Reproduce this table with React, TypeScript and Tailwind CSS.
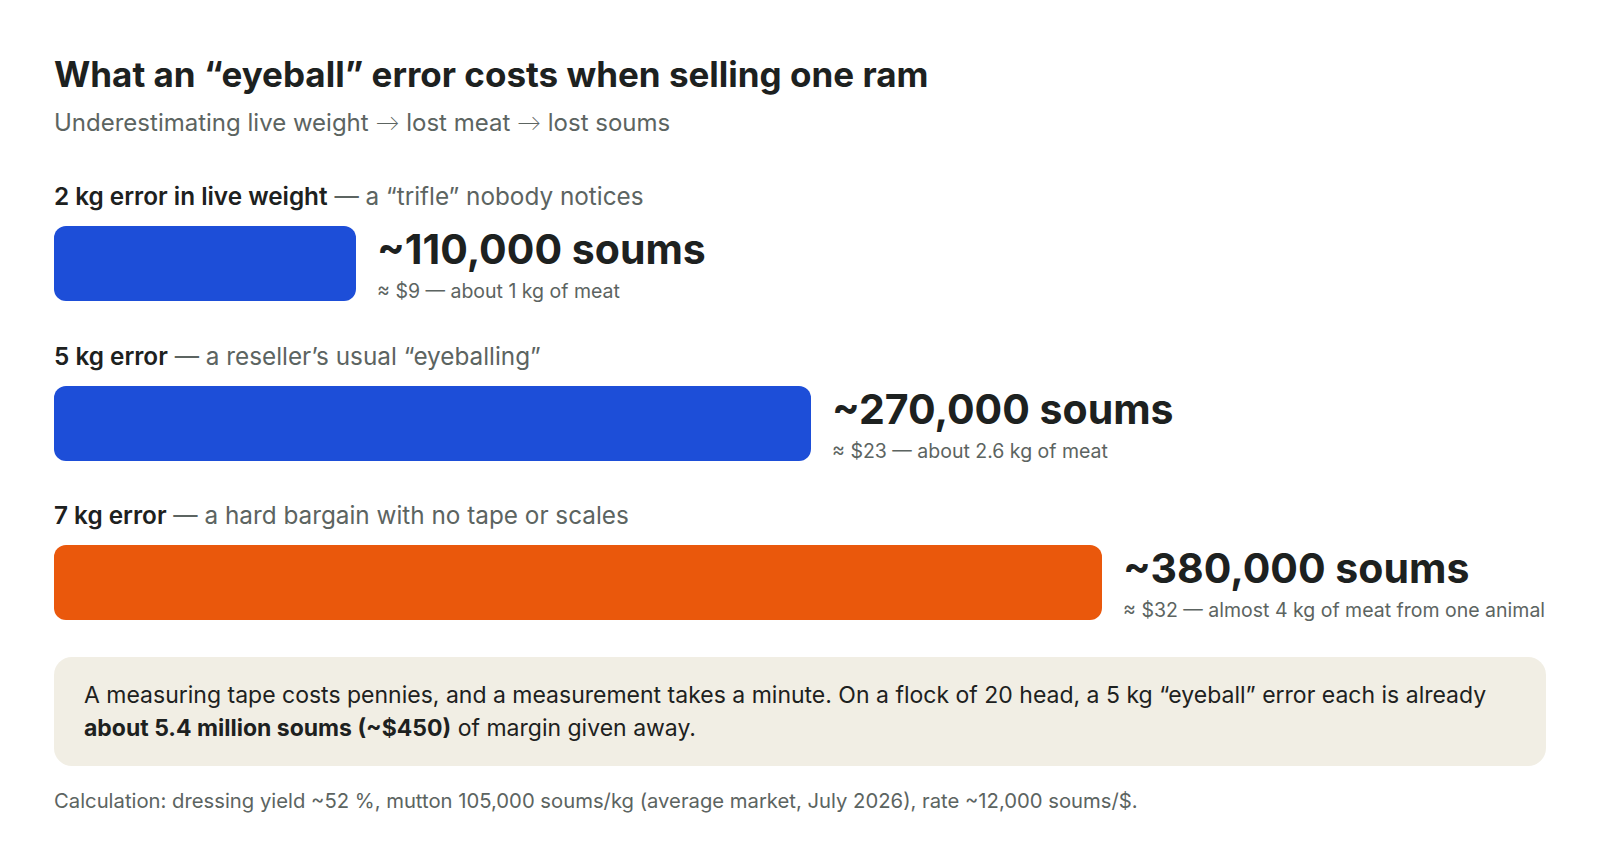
import React from "react";

const rows = [
  {
    strong: "2 kg error in live weight",
    rest: " — a “trifle” nobody notices",
    bar: "w-[302px] bg-[#1d4ed8]",
    value: "~110,000 soums",
    sub: "≈ $9 — about 1 kg of meat",
  },
  {
    strong: "5 kg error",
    rest: " — a reseller’s usual “eyeballing”",
    bar: "w-[757px] bg-[#1d4ed8]",
    value: "~270,000 soums",
    sub: "≈ $23 — about 2.6 kg of meat",
  },
  {
    strong: "7 kg error",
    rest: " — a hard bargain with no tape or scales",
    bar: "w-[1048px] bg-[#ea580c]",
    value: "~380,000 soums",
    sub: "≈ $32 — almost 4 kg of meat from one animal",
  },
];

function Arrow() {
  return <span className="font-['Lato',sans-serif] font-light">→</span>;
}

export default function App() {
  return (
    <div className="w-full min-h-[850px] bg-white px-[54px] pt-[53px] font-['Inter','Noto_Sans',sans-serif] text-[#1d2120]">
      <h1 className="text-[35px] font-bold leading-[42px] text-[#1d2120]">
        What an “eyeball” error costs when selling one ram
      </h1>
      <p className="mt-[12px] text-[24px] leading-[30px] text-[#5c6461]">
        Underestimating live weight <Arrow /> lost meat <Arrow /> lost soums
      </p>

      <div className="mt-[43px] flex flex-col gap-[39.5px]">
        {rows.map((r) => (
          <div key={r.value} className="flex flex-col gap-[15px]">
            <div className="text-[24.3px] leading-[30px] text-[#5c6461] whitespace-nowrap">
              <span className="font-semibold text-[#1d2120]">{r.strong}</span>
              {r.rest}
            </div>
            <div className="flex h-[75px] items-start gap-[21px]">
              <div className={`h-[75px] shrink-0 rounded-[12px] ${r.bar}`} />
              <div className="flex flex-col pt-[3px]">
                <div className="text-[41px] font-bold leading-[41px] text-[#1d2120] whitespace-nowrap">
                  {r.value}
                </div>
                <div className="mt-[12px] text-[19.5px] leading-[19.5px] text-[#5c6461] whitespace-nowrap">
                  {r.sub}
                </div>
              </div>
            </div>
          </div>
        ))}
      </div>

      <div className="mt-[37px] rounded-[18px] bg-[#f1eee4] px-[30px] py-[21.5px] text-[23px] leading-[33px] text-[#1d2120]">
        A measuring tape costs pennies, and a measurement takes a minute. On a flock of 20 head, a 5 kg “eyeball” error each is already{" "}
        <strong className="font-bold">about 5.4 million soums (~$450)</strong> of margin given away.
      </div>

      <p className="mt-[20px] text-[20.25px] leading-[30px] text-[#5c6461]">
        Calculation: dressing yield ~52 %, mutton 105,000 soums/kg (average market, July 2026), rate ~12,000 soums/$.
      </p>
    </div>
  );
}
